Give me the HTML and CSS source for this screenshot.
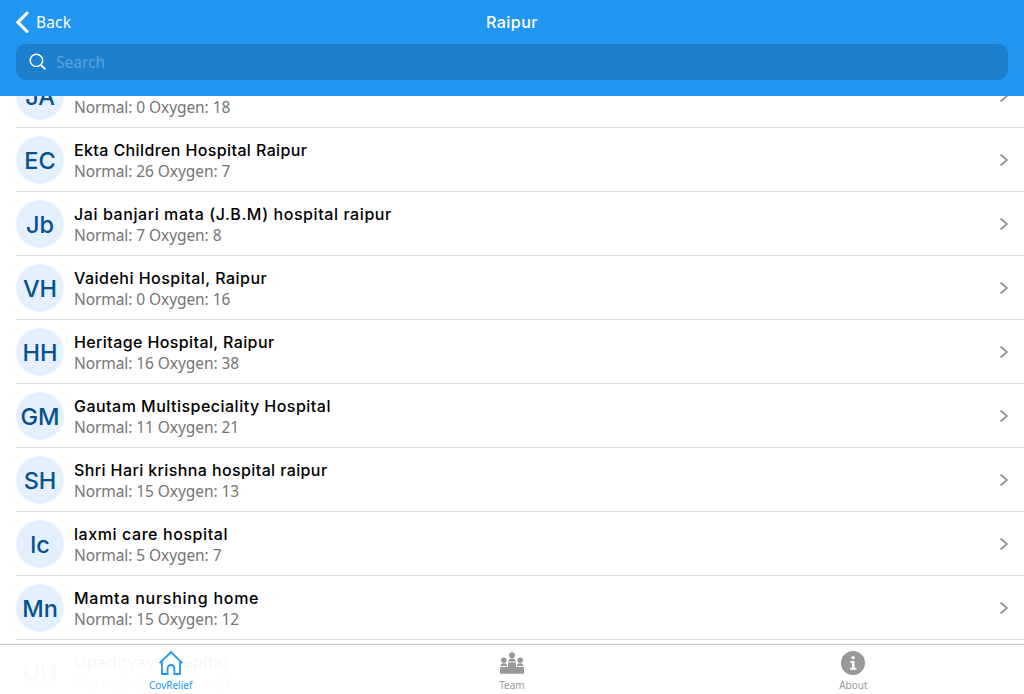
FILE: index.html
```html
<!DOCTYPE html>
<html lang="en">
<head>
<meta charset="utf-8">
<title>Raipur</title>
<link rel="stylesheet" href="styles.css">
</head>
<body>
<svg class="defs" aria-hidden="true">
  <symbol id="chevron" viewBox="0 0 10 14"><path d="M1.500 1.500 7.900 7 1.500 12.500" fill="none" stroke="currentColor" stroke-width="1.900"/></symbol>
</svg>
<div class="app">
  <header class="header">
    <div class="navbar">
      <a class="back"><svg class="back-icon" viewBox="0 0 14 22"><path d="M11 2.200 2 11.300l9 9" fill="none" stroke="currentColor" stroke-width="3.100" stroke-linecap="round"/></svg><span>Back</span></a>
      <h1 class="title">Raipur</h1>
      <span></span>
    </div>
    <div class="search">
      <svg class="search-icon" viewBox="0 0 18 18"><circle cx="7.400" cy="7.400" r="6.200" fill="none" stroke="currentColor" stroke-width="1.500"/><path d="m11.800 11.800 4.600 4.500" fill="none" stroke="currentColor" stroke-width="1.800"/></svg>
      <span>Search</span>
    </div>
  </header>
  <main class="content">
    <ul class="list">
      <li class="row"><span class="avatar">JA</span><div class="text"><span class="name">JA</span><span class="beds">Normal: 0 Oxygen: 18</span></div><svg class="chevron"><use href="#chevron"/></svg></li>
      <li class="row"><span class="avatar">EC</span><div class="text"><span class="name tight">Ekta Children Hospital Raipur</span><span class="beds">Normal: 26 Oxygen: 7</span></div><svg class="chevron"><use href="#chevron"/></svg></li>
      <li class="row"><span class="avatar">Jb</span><div class="text"><span class="name wide">Jai banjari mata (J.B.M) hospital raipur</span><span class="beds">Normal: 7 Oxygen: 8</span></div><svg class="chevron"><use href="#chevron"/></svg></li>
      <li class="row"><span class="avatar">VH</span><div class="text"><span class="name">Vaidehi Hospital, Raipur</span><span class="beds">Normal: 0 Oxygen: 16</span></div><svg class="chevron"><use href="#chevron"/></svg></li>
      <li class="row"><span class="avatar">HH</span><div class="text"><span class="name tight">Heritage Hospital, Raipur</span><span class="beds">Normal: 16 Oxygen: 38</span></div><svg class="chevron"><use href="#chevron"/></svg></li>
      <li class="row"><span class="avatar">GM</span><div class="text"><span class="name">Gautam Multispeciality Hospital</span><span class="beds">Normal: 11 Oxygen: 21</span></div><svg class="chevron"><use href="#chevron"/></svg></li>
      <li class="row"><span class="avatar">SH</span><div class="text"><span class="name tight">Shri Hari krishna hospital raipur</span><span class="beds">Normal: 15 Oxygen: 13</span></div><svg class="chevron"><use href="#chevron"/></svg></li>
      <li class="row"><span class="avatar">lc</span><div class="text"><span class="name wide">laxmi care hospital</span><span class="beds">Normal: 5 Oxygen: 7</span></div><svg class="chevron"><use href="#chevron"/></svg></li>
      <li class="row"><span class="avatar">Mn</span><div class="text"><span class="name wider">Mamta nurshing home</span><span class="beds">Normal: 15 Oxygen: 12</span></div><svg class="chevron"><use href="#chevron"/></svg></li>
      <li class="row"><span class="avatar">UH</span><div class="text"><span class="name wide">Upadhyay Hospital</span><span class="beds">Normal: 6 Oxygen: 29</span></div></li>
    </ul>
  </main>
  <nav class="tabs">
    <a class="tab tab-active"><svg class="tab-icon" viewBox="0 0 26 26"><path d="M1.600 13.200 13 2l11.400 11.200M4 11.500V24h5.600v-5.600a3.400 3.400 0 0 1 6.800 0V24H22V11.500" fill="none" stroke="currentColor" stroke-width="1.800"/></svg><span>CovRelief</span></a>
    <a class="tab"><svg class="tab-icon" viewBox="0 0 26 26" fill="currentColor"><circle cx="13" cy="5.200" r="3"/><path d="M9.300 11.500q0-3 3.700-3t3.700 3z"/><circle cx="4.800" cy="10.300" r="2.700"/><path d="M1.500 16q0-2.700 3.300-2.700t3.300 2.700z"/><circle cx="21.200" cy="10.300" r="2.700"/><path d="M17.900 16q0-2.700 3.300-2.700t3.300 2.700z"/><path d="M1 17h8v-4.500h8V17h8v6.700H1z"/></svg><span>Team</span></a>
    <a class="tab"><svg class="tab-icon" viewBox="0 0 26 26"><circle cx="13" cy="13" r="12" fill="currentColor"/><circle cx="13.100" cy="7.600" r="1.700" fill="#fff"/><path d="M10.300 10.900h4.200v6.800h1.800v2h-6.200v-2h1.900v-4.800h-1.700z" fill="#fff"/></svg><span>About</span></a>
  </nav>
</div>
</body>
</html>
```

FILE: styles.css
```css
* { box-sizing: border-box; }
body { margin: 0; background: #fff; font-family: "Noto Sans", "Open Sans", sans-serif; }
.defs { display: none; }
.app { position: relative; display: flex; flex-direction: column; height: 694px; overflow: hidden; }
.header { flex: none; height: 96px; padding: 0 16px; background: #2196f3; color: #fff; position: relative; z-index: 1; }
.navbar { display: grid; grid-template-columns: 1fr auto 1fr; align-items: center; height: 44px; }
.back { display: flex; align-items: center; gap: 6px; font-size: 15.500px; letter-spacing: 0.150px; }
.back-icon { width: 14px; height: 22px; }
.title { margin: 0; font: 500 16px/20px Inter, sans-serif; letter-spacing: 0.500px; }
.search { display: flex; align-items: center; gap: 9px; height: 36px; padding-left: 13px; border-radius: 10px; background: #1d80cf; color: #5ba3dd; font-size: 15.500px; }
.search-icon { width: 18px; height: 18px; color: #fff; }
.content { flex: 1; min-height: 0; overflow: hidden; }
.list { margin: -32px 0 0; padding: 0; list-style: none; }
.row { display: flex; align-items: center; gap: 10px; height: 64px; margin-left: 16px; padding-right: 15px; border-bottom: 1px solid #dedede; }
.avatar { display: flex; align-items: center; justify-content: center; flex: none; width: 48px; height: 48px; margin-top: 1px; border-radius: 50%; background: #e4f1fc; color: #07508f; font: 500 23.500px/24px Inter, sans-serif; padding-top: 1px; }
.text { display: flex; flex: 1; flex-direction: column; padding-top: 2px; }
.name { color: #000; font: 500 16px/21px Inter, sans-serif; letter-spacing: 0.480px; white-space: nowrap; }
.tight { letter-spacing: 0.390px; }
.wide { letter-spacing: 0.580px; }
.wider { letter-spacing: 0.740px; }
.beds { color: #757575; font-size: 15.500px; line-height: 20px; letter-spacing: -0.080px; white-space: nowrap; }
.chevron { width: 10px; height: 14px; color: #999; }
.tabs { position: absolute; inset: auto 0 0; z-index: 2; display: grid; grid-template-columns: repeat(3, 1fr); height: 50px; border-top: 1px solid #c4c4c4; background: rgba(255, 255, 255, 0.970); color: #999; }
.tab { display: flex; flex-direction: column; align-items: center; padding-top: 5px; font-size: 10px; line-height: 14px; }
.tab span { margin-top: 2px; }
.tab-active { color: #2196f3; }
.tab-icon { width: 26px; height: 26px; }
```
